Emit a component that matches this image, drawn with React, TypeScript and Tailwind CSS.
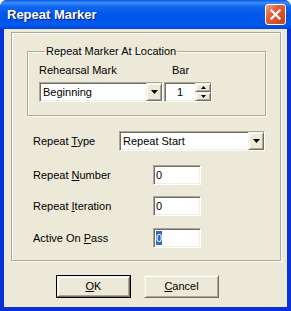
import React from 'react';

const sunken =
  'border border-t-[#ACA899] border-l-[#ACA899] border-r-white border-b-white shadow-[inset_1px_1px_0_#716F64,inset_-1px_-1px_0_#F1EFE2] bg-white';
const raised =
  'border border-t-[#F1EFE2] border-l-[#F1EFE2] border-r-[#716F64] border-b-[#716F64] shadow-[inset_1px_1px_0_#fff,inset_-1px_-1px_0_#ACA899] bg-[#ECE9D8]';

function DownArrow() {
  return (
    <svg width="7" height="4" viewBox="0 0 7 4">
      <path d="M0 0h7L3.5 4z" fill="#000" />
    </svg>
  );
}

function Combo({ value, width }: { value: string; width: string }) {
  return (
    <div className={`flex h-[20px] ${width} ${sunken}`}>
      <span className="flex-1 pl-[3px] leading-[18px] text-black">{value}</span>
      <div className={`flex h-[18px] w-[16px] items-center justify-center ${raised}`}>
        <DownArrow />
      </div>
    </div>
  );
}

function Edit({ value, selected }: { value: string; selected?: boolean }) {
  return (
    <div className={`flex h-[20px] w-[48px] items-center pl-[2px] ${sunken}`}>
      <span className={selected ? 'bg-[#316AC5] leading-[14px] text-white' : 'leading-[14px] text-black'}>{value}</span>
    </div>
  );
}

function Spin() {
  return (
    <div className={`flex h-[20px] w-[48px] ${sunken}`}>
      <span className="flex-1 text-center leading-[18px] text-black">1</span>
      <div className="flex w-[16px] flex-col">
        <div className={`flex h-[9px] items-center justify-center ${raised}`}>
          <svg width="5" height="3" viewBox="0 0 5 3">
            <path d="M0 3h5L2.5 0z" fill="#000" />
          </svg>
        </div>
        <div className={`flex h-[9px] items-center justify-center ${raised}`}>
          <svg width="5" height="3" viewBox="0 0 5 3">
            <path d="M0 0h5L2.5 3z" fill="#000" />
          </svg>
        </div>
      </div>
    </div>
  );
}

function Row({ label, u, rest, children, className }: { label: string; u: string; rest: string; children: React.ReactNode; className: string }) {
  return (
    <div className={`flex h-[20px] items-center pl-[21px] ${className}`}>
      <span className="w-[86px] text-black">
        {label}
        <span className="underline">{u}</span>
        {rest}
      </span>
      {children}
    </div>
  );
}

function Button({ children, def }: { children: React.ReactNode; def?: boolean }) {
  return (
    <div className={`h-[23px] w-[75px] ${def ? 'border border-black' : ''}`}>
      <div className={`flex h-full w-full items-center justify-center text-black ${raised}`}>{children}</div>
    </div>
  );
}

export default function App() {
  return (
    <div className="h-[311px] w-[291px] overflow-hidden rounded-t-[7px] bg-[#0831D9] font-['Liberation_Sans',Arial,sans-serif] text-[11px] leading-[13px]">
      <div className="flex h-[29px] items-center justify-between bg-[linear-gradient(to_bottom,#0A5AE8_0%,#3D8EF8_10%,#1368F0_22%,#0056E6_50%,#0058EE_85%,#0046D6_100%)] pl-[7px] pr-[5px]">
        <span className="text-[13px] font-bold text-white [text-shadow:1px_1px_0_#0A1E8C]">Repeat Marker</span>
        <div className="flex h-[21px] w-[21px] items-center justify-center rounded-[3px] border border-white bg-[linear-gradient(135deg,#F2A385_0%,#E2613B_35%,#C7411B_100%)]">
          <svg width="11" height="11" viewBox="0 0 11 11">
            <path d="M1.5 1.5l8 8M9.5 1.5l-8 8" stroke="#fff" strokeWidth="2.2" strokeLinecap="square" />
          </svg>
        </div>
      </div>

      <div className="mx-[4px] flex h-[278px] flex-col bg-[#ECE9D8] pl-[7px] pt-[3px]">
        <div className="h-[229px] w-[270px] border border-[#ACA899] shadow-[inset_1px_1px_0_#fff,1px_1px_0_#fff]">
          <fieldset className="ml-[15px] mt-[12px] h-[71px] w-[239px] border border-[#ACA899] pl-[11px] shadow-[inset_1px_1px_0_#fff,1px_1px_0_#fff]">
            <legend className="ml-[6px] px-[1px] text-black">Repeat Marker At Location</legend>
            <div className="flex gap-[1px]">
              <div className="flex flex-col">
                <span className="mt-[6px] text-black">Rehearsal Mark</span>
                <div className="mt-[5px]">
                  <Combo value="Beginning" width="w-[124px]" />
                </div>
              </div>
              <div className="flex flex-col">
                <span className="mt-[6px] pl-[8px] text-black">Bar</span>
                <div className="mt-[5px]">
                  <Spin />
                </div>
              </div>
            </div>
          </fieldset>

          <Row label="Repeat " u="T" rest="ype" className="mt-[15px]">
            <Combo value="Repeat Start" width="w-[146px]" />
          </Row>
          <Row label="Repeat " u="N" rest="umber" className="mt-[14px]">
            <div className="pl-[34px]">
              <Edit value="0" />
            </div>
          </Row>
          <Row label="Repeat " u="I" rest="teration" className="mt-[11px]">
            <div className="pl-[34px]">
              <Edit value="0" />
            </div>
          </Row>
          <Row label="Active On " u="P" rest="ass" className="mt-[12px]">
            <div className="pl-[34px]">
              <Edit value="0" selected />
            </div>
          </Row>
        </div>

        <div className="mt-[14px] flex gap-[13px] pl-[45px]">
          <Button def>
            <span className="underline">O</span>K
          </Button>
          <Button>
            <span className="underline">C</span>ancel
          </Button>
        </div>
      </div>
    </div>
  );
}
